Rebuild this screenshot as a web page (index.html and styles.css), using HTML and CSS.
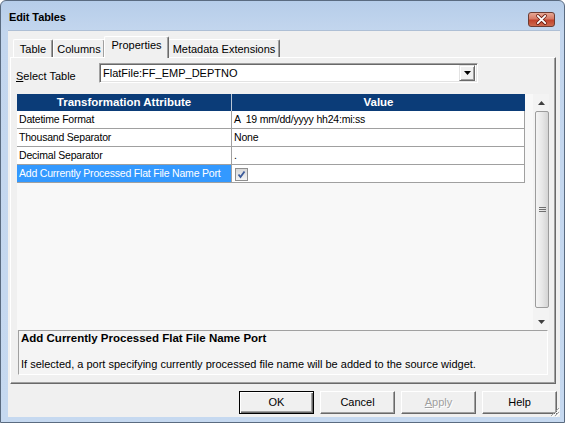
FILE: index.html
```html
<!DOCTYPE html>
<html>
<head>
<meta charset="utf-8">
<link rel="stylesheet" href="styles.css">
</head>
<body>
<div class="window">
  <div class="titlebar">
    <span class="title">Edit Tables</span>
    <div class="close">
      <svg width="27" height="15" viewBox="0 0 27 15">
        <path d="M9.5 3.5 L17.5 11.5 M17.5 3.5 L9.5 11.5" stroke="#6b1d12" stroke-width="3.6" stroke-linecap="round"/>
        <path d="M9.5 3.5 L17.5 11.5 M17.5 3.5 L9.5 11.5" stroke="#ffffff" stroke-width="2" stroke-linecap="round"/>
      </svg>
    </div>
  </div>
  <div class="client">
    <div class="tabs">
      <div class="tab tab-table">Table</div>
      <div class="tab tab-columns">Columns</div>
      <div class="tab tab-props active">Properties</div>
      <div class="tab tab-meta">Metadata Extensions</div>
    </div>
    <div class="panel">
      <div class="select-row">
        <span class="label"><u>S</u>elect Table</span>
        <div class="combo">
          <span class="combo-text">FlatFile:FF_EMP_DEPTNO</span>
          <div class="drop">
            <svg width="7" height="4" viewBox="0 0 7 4"><path d="M0 0 H7 L3.5 4 Z" fill="#000"/></svg>
          </div>
        </div>
      </div>
      <div class="grid">
        <div class="grid-main">
          <div class="hdr">
            <div class="hc c1">Transformation Attribute</div>
            <div class="hc c2">Value</div>
          </div>
          <div class="row">
            <div class="cell c1">Datetime Format</div>
            <div class="cell c2 pre">A  19 mm/dd/yyyy hh24:mi:ss</div>
          </div>
          <div class="row">
            <div class="cell c1">Thousand Separator</div>
            <div class="cell c2">None</div>
          </div>
          <div class="row">
            <div class="cell c1">Decimal Separator</div>
            <div class="cell c2">.</div>
          </div>
          <div class="row">
            <div class="cell c1 selected">Add Currently Processed Flat File Name Port</div>
            <div class="cell c2">
              <span class="check">
                <svg width="11" height="11" viewBox="0 0 11 11"><path d="M2.5 5.5 L4.5 8 L8.5 2.5" stroke="#3b5a9a" stroke-width="1.8" fill="none"/></svg>
              </span>
            </div>
          </div>
        </div>
        <div class="vscroll">
          <div class="arrow">
            <svg width="7" height="4" viewBox="0 0 7 4"><path d="M0 4 H7 L3.5 0 Z" fill="#404040"/></svg>
          </div>
          <div class="track">
            <div class="thumb">
              <svg width="7" height="6" viewBox="0 0 7 6"><path d="M0 0.5 H7 M0 2.5 H7 M0 4.5 H7" stroke="#6f6f6f" stroke-width="1"/></svg>
            </div>
          </div>
          <div class="arrow">
            <svg width="7" height="4" viewBox="0 0 7 4"><path d="M0 0 H7 L3.5 4 Z" fill="#404040"/></svg>
          </div>
        </div>
      </div>
      <div class="desc">
        <div class="desc-title">Add Currently Processed Flat File Name Port</div>
        <div class="desc-text">If selected, a port specifying currently processed file name will be added to the source widget.</div>
      </div>
    </div>
    <div class="buttons">
      <div class="btn default">OK</div>
      <div class="btn">Cancel</div>
      <div class="btn disabled"><u>A</u>pply</div>
      <div class="btn">Help</div>
    </div>
    <div class="grip">
      <svg width="11" height="11" viewBox="0 0 11 11">
        <path d="M10 2 L2 10 M10 6 L6 10" stroke="#a0a0a0" stroke-width="1"/>
        <path d="M11 3 L3 11 M11 7 L7 11" stroke="#ffffff" stroke-width="1"/>
      </svg>
    </div>
  </div>
</div>
</body>
</html>
```

FILE: styles.css
```css
* { box-sizing: border-box; }
html, body { margin: 0; padding: 0; }
body {
  width: 565px;
  height: 423px;
  overflow: hidden;
  background: #ffffff;
  font-family: "Liberation Sans", Arial, sans-serif;
  font-size: 11px;
  color: #000;
}
.window {
  width: 565px;
  height: 423px;
  border: 1px solid #5a6b80;
  border-radius: 6px 6px 0 0;
  background: linear-gradient(to bottom, #b6cde9 0px, #c3d6ee 30px, #c6d9f0 100%);
  display: flex;
  flex-direction: column;
}
.titlebar {
  height: 29px;
  flex: none;
  display: flex;
  justify-content: space-between;
  align-items: flex-start;
  padding: 0 9px 0 8px;
}
.title {
  font-weight: bold;
  font-size: 11px;
  margin-top: 10px;
  color: #000;
  letter-spacing: -0.1px;
}
.close {
  margin-top: 11px;
  width: 27px;
  height: 15px;
  border: 1px solid #6d3c32;
  border-radius: 3px;
  background: linear-gradient(to bottom, #e6a895 0%, #d77a66 45%, #c2432c 55%, #cd6a4f 100%);
  display: flex;
  align-items: center;
  justify-content: center;
  overflow: hidden;
}
.close svg { display: block; margin-top: -1px; }
.client {
  position: relative;
  margin-left: 7px;
  width: 552px;
  height: 387px;
  background: #f0f0f0;
  border-top: 1px solid #aebfd5;
  display: flex;
  flex-direction: column;
}
.tabs {
  height: 26px;
  flex: none;
  display: flex;
  align-items: flex-end;
  padding-left: 5px;
}
.tab {
  height: 18px;
  border-top: 1px solid #ffffff;
  border-left: 1px solid #ffffff;
  border-right: 1px solid #696969;
  box-shadow: inset -1px 0 0 #a0a0a0;
  border-radius: 2px 2px 0 0;
  padding-top: 3px;
  text-align: center;
  background: #f0f0f0;
  white-space: nowrap;
}
.tab-table { width: 40px; }
.tab-columns { width: 52px; }
.tab-props { width: 63px; }
.tab-meta { width: 112px; }
.tab.active {
  height: 22px;
  width: 65px;
  margin: 0 -1px -1px -1px;
  padding-top: 2px;
  position: relative;
  z-index: 1;
  border-bottom: none;
}
.panel {
  margin-left: 2px;
  width: 546px;
  height: 327px;
  flex: none;
  border-top: 1px solid #ffffff;
  border-left: 1px solid #ffffff;
  border-right: 1px solid #696969;
  border-bottom: 1px solid #696969;
  box-shadow: inset -1px -1px 0 #a0a0a0;
  padding: 5px 6px 0 6px;
  display: flex;
  flex-direction: column;
}
.select-row {
  height: 20px;
  display: flex;
  align-items: flex-end;
}
.label {
  width: 83px;
  margin-left: -1px;
  line-height: 14px;
}
.combo {
  width: 379px;
  height: 20px;
  background: #fff;
  border-top: 1px solid #a0a0a0;
  border-left: 1px solid #a0a0a0;
  border-right: 1px solid #ffffff;
  border-bottom: 1px solid #ffffff;
  box-shadow: inset 1px 1px 0 #696969, inset -1px -1px 0 #e3e3e3;
  display: flex;
  align-items: center;
  justify-content: space-between;
  padding: 0 2px 0 3px;
}
.combo-text { line-height: 14px; }
.drop {
  width: 16px;
  height: 16px;
  background: #f0f0f0;
  border-top: 1px solid #e3e3e3;
  border-left: 1px solid #e3e3e3;
  border-right: 1px solid #696969;
  border-bottom: 1px solid #696969;
  box-shadow: inset 1px 1px 0 #ffffff, inset -1px -1px 0 #a0a0a0;
  display: flex;
  align-items: center;
  justify-content: center;
}
.drop svg { display: block; }
.grid {
  margin-top: 11px;
  height: 236px;
  display: flex;
}
.grid-main {
  width: 516px;
  height: 236px;
  background: #f8f8f8;
}
.hdr {
  width: 508px;
  height: 17px;
  background: #0b3c78;
  display: flex;
  color: #fff;
  font-weight: bold;
}
.hc {
  line-height: 17px;
  text-align: center;
  font-size: 11.5px;
}
.c1 { width: 215px; flex: none; }
.c2 { width: 293px; flex: none; }
.hdr .c1 { border-right: 1px solid #b9c6d6; }
.row {
  width: 508px;
  height: 18px;
  display: flex;
  background: #fff;
  border-bottom: 1px solid #a0a0a0;
  border-right: 1px solid #a0a0a0;
}
.cell {
  line-height: 17px;
  padding-left: 2px;
  white-space: nowrap;
  overflow: hidden;
  font-size: 10.5px;
  letter-spacing: -0.2px;
}
.row .c1 { border-right: 1px solid #a0a0a0; }
.row .c2 { width: 292px; }
.pre { white-space: pre; }
.selected {
  background: #3399ff;
  color: #fff;
}
.check {
  display: inline-flex;
  width: 13px;
  height: 13px;
  margin-top: 3px;
  margin-left: 1px;
  border: 1px solid #8f8f8f;
  background: linear-gradient(to bottom, #d8d8d8, #f4f4f4);
  align-items: center;
  justify-content: center;
  vertical-align: top;
}
.check svg { display: block; }
.vscroll {
  width: 16px;
  height: 236px;
  background: #f3f3f3;
  display: flex;
  flex-direction: column;
}
.arrow {
  height: 17px;
  display: flex;
  align-items: center;
  justify-content: center;
  flex: none;
}
.arrow svg { display: block; }
.track {
  flex: 1;
  padding: 0 0 4px 2px;
}
.thumb {
  height: 197px;
  width: 14px;
  border: 1px solid #9c9c9c;
  border-radius: 2px;
  background: linear-gradient(to right, #f4f4f4 0%, #e8e8e8 50%, #d4d4d4 100%);
  display: flex;
  align-items: center;
  justify-content: center;
}
.thumb svg { display: block; }
.desc {
  margin-left: 1px;
  width: 530px;
  height: 45px;
  border-top: 1px solid #a0a0a0;
  border-left: 1px solid #a0a0a0;
  border-right: 1px solid #ffffff;
  border-bottom: 1px solid #ffffff;
  background: #f4f4f4;
  padding: 0 0 0 2px;
}
.desc-title {
  font-weight: bold;
  line-height: 14px;
  font-size: 11.5px;
}
.desc-text {
  margin-top: 12px;
  line-height: 14px;
  white-space: nowrap;
}
.buttons {
  margin-top: 7px;
  height: 23px;
  display: flex;
  justify-content: flex-end;
  gap: 6px;
  padding-right: 3px;
}
.btn {
  width: 75px;
  height: 23px;
  border-top: 1px solid #ffffff;
  border-left: 1px solid #ffffff;
  border-right: 1px solid #696969;
  border-bottom: 1px solid #696969;
  box-shadow: inset -1px -1px 0 #a0a0a0;
  background: #f0f0f0;
  text-align: center;
  line-height: 20px;
}
.btn.default {
  border: 1px solid #000;
  box-shadow: inset 1px 1px 0 #ffffff, inset -1px -1px 0 #696969, inset -2px -2px 0 #a0a0a0;
}
.btn.disabled { color: #a0a0a0; text-shadow: 1px 1px 0 #fff; }
.grip {
  position: absolute;
  right: 0;
  bottom: 0;
  width: 11px;
  height: 11px;
}
.grip svg { display: block; }
```
